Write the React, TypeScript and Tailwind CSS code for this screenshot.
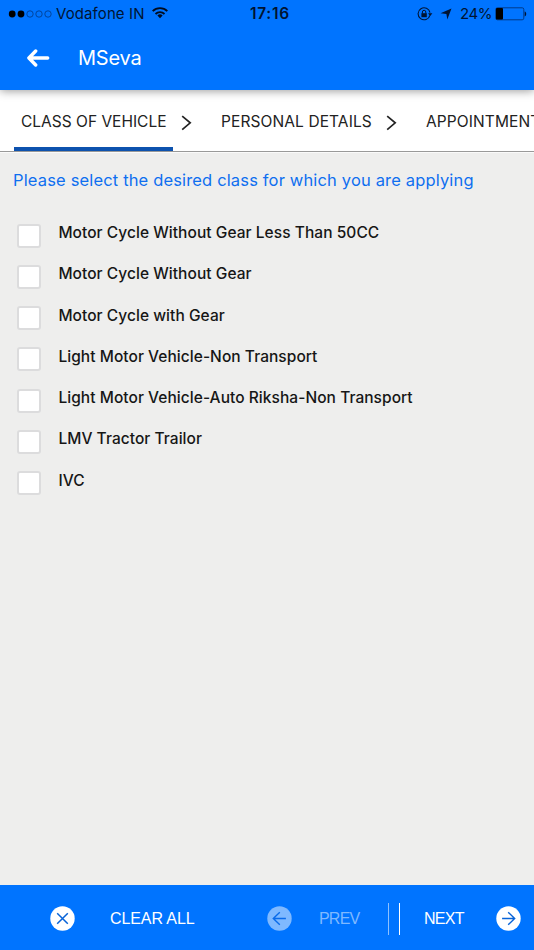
import { useState } from 'react';

const vehicleClasses = [
  'Motor Cycle Without Gear Less Than 50CC',
  'Motor Cycle Without Gear',
  'Motor Cycle with Gear',
  'Light Motor Vehicle-Non Transport',
  'Light Motor Vehicle-Auto Riksha-Non Transport',
  'LMV Tractor Trailor',
  'IVC',
];

function StatusBar() {
  return (
    <div className="flex h-7 items-center text-[#001433]">
      <svg className="mt-[-1px] ml-2 shrink-0" width="45" height="8" viewBox="0 0 45 8">
        <circle cx="4.2" cy="4" r="3.4" fill="#000" />
        <circle cx="13" cy="4" r="3.4" fill="#000" />
        <circle cx="22" cy="4" r="3.2" fill="none" stroke="#003a85" strokeWidth="0.8" />
        <circle cx="31" cy="4" r="3.2" fill="none" stroke="#003a85" strokeWidth="0.8" />
        <circle cx="40" cy="4" r="3.2" fill="none" stroke="#003a85" strokeWidth="0.8" />
      </svg>
      <span className="ml-[3px] w-[95px] shrink-0 text-[15px] leading-7 tracking-[0.1px] whitespace-nowrap">Vodafone IN</span>
      <svg className="mt-[-3px] shrink-0" width="18" height="13" viewBox="0 0 18 13" fill="none" stroke="#000c20">
        <path d="M1.7 5.1a10.4 10.4 0 0 1 14.6 0" strokeWidth="1.9" />
        <path d="M4.5 8a6.4 6.4 0 0 1 9 0" strokeWidth="1.8" />
        <path d="M9 12.2 6.4 9.6a3.7 3.7 0 0 1 5.2 0z" fill="#000c20" stroke="none" />
      </svg>
      <span className="ml-[81px] w-[41px] shrink-0 text-[15.5px] leading-7 font-semibold tracking-[0.7px] whitespace-nowrap">17:16</span>
      <svg className="mt-[-1px] ml-[126px] shrink-0" width="16" height="14" viewBox="0 0 16 14" fill="none" stroke="#001433">
        <path d="M12.9 8.3A6 6 0 1 1 13 5.7" strokeWidth="1.1" />
        <path d="M11 6.2h4.4l-2.2 2.8z" fill="#001433" stroke="none" />
        <rect x="4.4" y="6.2" width="5.4" height="4" fill="#001433" stroke="none" />
        <path d="M5.4 6.5V5a1.7 1.7 0 0 1 3.4 0v1.5" strokeWidth="1" />
      </svg>
      <svg className="mt-[-1px] ml-[7px] shrink-0" width="12" height="12" viewBox="0 0 12 12">
        <path d="M11.5.6 7.3 11.6 6.4 6 .5 5.3z" fill="#001433" />
      </svg>
      <span className="ml-[8px] w-[35px] shrink-0 text-[15px] leading-7 tracking-[-0.4px] whitespace-nowrap">24%</span>
      <svg className="mt-[-1px] shrink-0" width="32" height="14" viewBox="0 0 32 14">
        <rect x="0.8" y="0.8" width="28" height="12" rx="1.6" fill="none" stroke="#002c6b" strokeWidth="0.8" />
        <rect x="1" y="1" width="7" height="11.6" rx="1" fill="#000" />
        <path d="M29.7 4.6c2 .6 2 4.2 0 4.8z" fill="#001433" />
      </svg>
    </div>
  );
}

function Chevron({ className }: { className: string }) {
  return (
    <svg className={className} width="11" height="16" viewBox="0 0 11 16" fill="none" stroke="#222" strokeWidth="1.7">
      <path d="M1.2 1.2 9.2 7.8 1.2 14.6" />
    </svg>
  );
}

export default function App() {
  const [selected, setSelected] = useState<string[]>([]);

  const toggle = (name: string) => {
    setSelected(selected.includes(name) ? selected.filter((s) => s !== name) : [...selected, name]);
  };

  return (
    <main className="flex h-[950px] w-[534px] flex-col overflow-hidden bg-[#eeeeed] font-['Inter',sans-serif]">
      <header className="relative z-10 h-[90px] shrink-0 bg-[#0074ff] shadow-[0_1px_9px_rgba(0,0,0,0.4)]">
        <StatusBar />
        <div className="flex h-[60px] items-center">
          <svg className="ml-[27px] shrink-0" width="23" height="18" viewBox="0 0 23 18" fill="none" stroke="#fff" strokeWidth="3.4" strokeLinecap="round" strokeLinejoin="round">
            <path d="M8.7 2 1.9 9l6.8 7M2.4 9h18.3" />
          </svg>
          <h1 className="ml-[28px] text-[20px] leading-7 tracking-[-0.2px] text-white">MSeva</h1>
        </div>
      </header>

      {/* steps */}
      <nav className="flex h-[63px] shrink-0 overflow-hidden border-b border-[#fafafa] bg-white text-[15.5px] leading-[63px] whitespace-nowrap text-[#222]">
        <div className="flex h-[62px] w-[534px] shrink-0 border-b border-[#999]">
          <div className="ml-[14px] h-[61px] w-[159px] shrink-0 border-b-4 border-[#0d52ae] pl-[7px]">CLASS OF VEHICLE</div>
          <Chevron className="mt-[25px] ml-[8px] shrink-0" />
          <div className="ml-[29px] w-[151px] shrink-0 tracking-[0.1px]">PERSONAL DETAILS</div>
          <Chevron className="mt-[25px] ml-[14px] shrink-0" />
          <div className="ml-[29px] shrink-0 tracking-[0.1px]">APPOINTMENT</div>
        </div>
      </nav>

      <section className="flex-1">
        <p className="mt-[15px] ml-[13px] text-[16.5px] leading-6 tracking-[0.155px] whitespace-nowrap text-[#0f6ff0]">
          Please select the desired class for which you are applying
        </p>
        <ul className="mt-[28px]">
          {vehicleClasses.map((name) => (
            <li key={name} className="h-[41.3px]">
              <label className="flex items-start">
                <input
                  type="checkbox"
                  checked={selected.includes(name)}
                  onChange={() => toggle(name)}
                  className="mt-[3.5px] ml-[17.4px] size-[24px] shrink-0 appearance-none rounded-[3px] border-2 border-[#dcdcdd] bg-white checked:bg-[#0074ff]"
                />
                <span className="mt-px ml-[17px] text-[15.5px] leading-6 font-medium tracking-[0.05px] whitespace-nowrap text-[#161616]">{name}</span>
              </label>
            </li>
          ))}
        </ul>
      </section>

      <footer className="flex h-[65px] shrink-0 items-center bg-[#0074ff] pt-[2px] font-['Liberation_Sans',Arial,sans-serif] text-[16px] whitespace-nowrap text-white">
        <svg className="ml-[50px] shrink-0" width="25" height="25" viewBox="0 0 25 25" fill="none">
          <circle cx="12.5" cy="12.5" r="12.2" fill="#fff" />
          <path d="M7.2 7.2 17.8 17.8M17.8 7.2 7.2 17.8" stroke="#0863d8" strokeWidth="1.5" />
        </svg>
        <button className="ml-[35px] w-[85px] shrink-0 text-left tracking-[-0.1px]">CLEAR ALL</button>
        <svg className="ml-[72px] shrink-0" width="25" height="25" viewBox="0 0 25 25" fill="none">
          <circle cx="12.5" cy="12.5" r="12.2" fill="#7fb9ff" />
          <path d="M12.8 6.2 6.3 12.5l6.5 6.3M6.3 12.5h12.6" stroke="#0a6bea" strokeWidth="1.4" />
        </svg>
        <button className="ml-[27px] w-[42px] shrink-0 text-left tracking-[-0.8px] text-[#7fb9ff]" disabled>PREV</button>
        <div className="ml-[27px] h-[32px] w-[12px] shrink-0 border-x border-l-[#8ec1ff] border-r-white" />
        <button className="ml-[24px] w-[42px] shrink-0 text-left tracking-[-0.7px]">NEXT</button>
        <svg className="ml-[30px] shrink-0" width="25" height="25" viewBox="0 0 25 25" fill="none">
          <circle cx="12.5" cy="12.5" r="12.2" fill="#fff" />
          <path d="m12.2 6.2 6.5 6.3-6.5 6.3M18.7 12.5H6.1" stroke="#0863d8" strokeWidth="1.4" />
        </svg>
      </footer>
    </main>
  );
}
